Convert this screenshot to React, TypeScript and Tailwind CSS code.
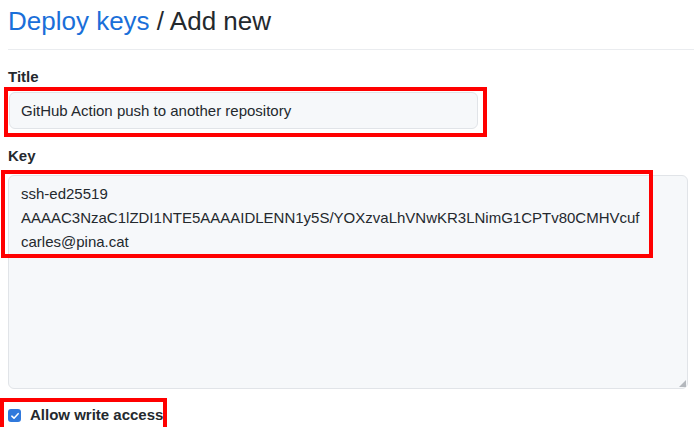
const keyValue =
  'ssh-ed25519\nAAAAC3NzaC1lZDI1NTE5AAAAIDLENN1y5S/YOXzvaLhVNwKR3LNimG1CPTv80CMHVcuf\ncarles@pina.cat';

const App = () => {
  return (
    <div className="relative w-[694px] h-[427px] overflow-hidden bg-white font-['Liberation_Sans',Arial,sans-serif] text-[#24292e]">
      <div className="ml-2 pt-[6px] pb-[13px] border-b border-[#eaecef]">
        <h1 className="text-[26px] leading-[30px] font-normal">
          <a href="#" className="text-[#1a6fd9]">Deploy keys</a>
          <span> / Add new</span>
        </h1>
      </div>

      <form className="pl-2 pt-[17px]" onSubmit={(e) => e.preventDefault()}>
        <label className="block text-[15px] leading-[20px] font-bold">Title</label>
        <input
          type="text"
          readOnly
          value="GitHub Action push to another repository"
          className="mt-[5px] ml-[1px] block w-[469px] h-[37px] px-[11px] rounded-md border border-[#e1e4e8] bg-[#f6f8fa] text-[15px] text-[#24292e] outline-none"
        />

        <label className="mt-[17px] block text-[15px] leading-[20px] font-bold">Key</label>
        <div className="relative mt-[9px] w-[680px]">
          <textarea
            readOnly
            value={keyValue}
            className="block w-[680px] h-[214px] resize-none pl-[12px] pr-2 pt-[6px] rounded-md border border-[#e1e4e8] bg-[#f6f8fa] text-[15px] leading-[24px] text-[#24292e] outline-none"
          />
          {/* resize grip */}
          <svg viewBox="0 0 7 7" className="absolute right-[2px] bottom-[2px] h-[7px] w-[7px]">
            <path d="M7 0 7 7 0 7Z" fill="#b4b8bd" />
          </svg>
        </div>

        <label className="mt-[16px] flex items-center gap-[9px] text-[15px] leading-[20px] font-bold">
          <span className="mt-[1px] flex h-[13px] w-[13px] items-center justify-center rounded-[3px] bg-[#3079dc]">
            <svg viewBox="0 0 12 12" className="h-[10px] w-[10px]" fill="none">
              <path d="M2.2 6.2 4.8 8.6 9.8 3.2" stroke="white" strokeWidth="1.8" strokeLinecap="round" strokeLinejoin="round" />
            </svg>
          </span>
          Allow write access
        </label>
      </form>

      {/* annotation boxes */}
      <div className="absolute left-[4px] top-[87px] w-[483px] h-[50px] border-[4px] border-[#ff0000] pointer-events-none" />
      <div className="absolute left-[1px] top-[170px] w-[652px] h-[88px] border-[4px] border-[#ff0000] pointer-events-none" />
      <div className="absolute left-0 top-[398px] w-[167px] h-[40px] border-[4px] border-[#ff0000] pointer-events-none" />
    </div>
  );
};

export default App;
